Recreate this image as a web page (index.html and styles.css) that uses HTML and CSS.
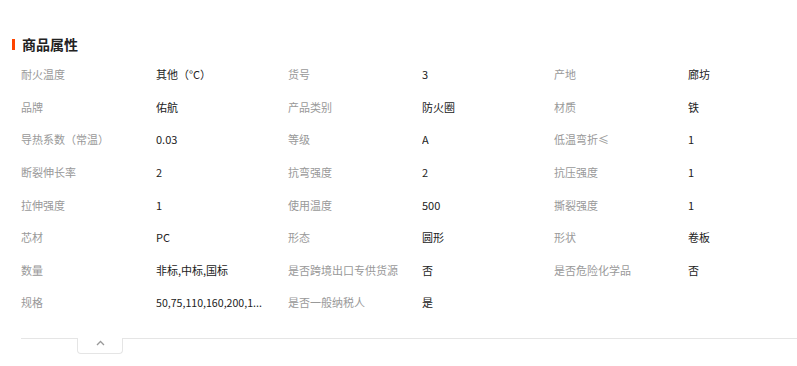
FILE: index.html
```html
<!DOCTYPE html>
<html lang="zh">
<head>
<meta charset="utf-8">
<link rel="stylesheet" href="styles.css">
</head>
<body>
<div class="attrs">
  <h2 class="title">商品属性</h2>
  <div class="grid">
    <div class="k">耐火温度</div><div class="v">其他（°C）</div>
    <div class="k">货号</div><div class="v">3</div>
    <div class="k">产地</div><div class="v">廊坊</div>

    <div class="k">品牌</div><div class="v">佑航</div>
    <div class="k">产品类别</div><div class="v">防火圈</div>
    <div class="k">材质</div><div class="v">铁</div>

    <div class="k">导热系数（常温）</div><div class="v">0.03</div>
    <div class="k">等级</div><div class="v">A</div>
    <div class="k">低温弯折≤</div><div class="v">1</div>

    <div class="k">断裂伸长率</div><div class="v">2</div>
    <div class="k">抗弯强度</div><div class="v">2</div>
    <div class="k">抗压强度</div><div class="v">1</div>

    <div class="k">拉伸强度</div><div class="v">1</div>
    <div class="k">使用温度</div><div class="v">500</div>
    <div class="k">撕裂强度</div><div class="v">1</div>

    <div class="k">芯材</div><div class="v">PC</div>
    <div class="k">形态</div><div class="v">圆形</div>
    <div class="k">形状</div><div class="v">卷板</div>

    <div class="k">数量</div><div class="v">非标,中标,国标</div>
    <div class="k">是否跨境出口专供货源</div><div class="v">否</div>
    <div class="k">是否危险化学品</div><div class="v">否</div>

    <div class="k">规格</div><div class="v v-num">50,75,110,160,200,1...</div>
    <div class="k">是否一般纳税人</div><div class="v">是</div>
  </div>
  <div class="fold">
    <button class="fold-tab" type="button" aria-label="收起">
      <svg width="9" height="6" viewBox="0 0 9 6"><path d="M1 5 L4.5 1.5 L8 5" fill="none" stroke="#999" stroke-width="1.3"/></svg>
    </button>
  </div>
</div>
</body>
</html>
```

FILE: styles.css
```css
html, body {
  margin: 0;
  padding: 0;
  background: #fff;
}
body {
  font-family: "Noto Sans CJK SC", "Noto Sans", sans-serif;
  font-size: 11px;
  color: #333;
  overflow: hidden;
}
.attrs {
  padding: 36px 0 0 21px;
}
.title {
  display: flex;
  align-items: center;
  gap: 7px;
  margin: 0 0 6px -9px;
  font-size: 14px;
  font-weight: bold;
  line-height: 16px;
  height: 16px;
  color: #222;
}
.title::before {
  content: "";
  width: 3px;
  height: 11px;
  background: #ff4400;
}
.grid {
  display: grid;
  grid-template-columns: 135px 132px 134px 132px 134px 132px;
  grid-auto-rows: 32.6px;
  align-items: center;
  width: 800px;
}
.k {
  color: #999;
  white-space: nowrap;
}
.v {
  color: #222;
  white-space: nowrap;
  overflow: hidden;
  text-overflow: ellipsis;
  max-width: 118px;
}
.v-num {
  font-size: 10.6px;
}
.fold {
  margin-top: 19px;
  border-top: 1px solid #e5e5e5;
  height: 20px;
}
.fold-tab {
  display: flex;
  align-items: center;
  justify-content: center;
  margin-left: 56px;
  margin-top: -1px;
  width: 46px;
  height: 16px;
  padding: 0 0 5px;
  border: 1px solid #e5e5e5;
  border-top: none;
  border-radius: 0 0 4px 4px;
  background: #fff;
  box-sizing: border-box;
}
```
